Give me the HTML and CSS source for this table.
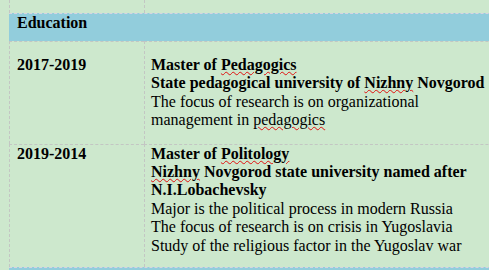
FILE: index.html
```html
<!DOCTYPE html>
<html lang="en">
<head>
<meta charset="utf-8">
<title>Education</title>
<link rel="stylesheet" href="styles.css">
</head>
<body>
<div class="table">
  <div class="cell prev"></div>
  <div class="cell prev"></div>

  <div class="head"><b>Education</b></div>

  <div class="cell c1 first"><b>2017-2019</b></div>
  <div class="cell c2 first">
    <b>Master of <span class="sp">Pedagogics</span></b><br>
    <b>State pedagogical university of <span class="sp">Nizhny</span> Novgorod</b><br>
    The focus of research is on organizational management in <span class="sp">pedagogics</span>
  </div>

  <div class="cell c1 second"><b>2019-2014</b></div>
  <div class="cell c2 second">
    <b>Master of <span class="sp">Politology</span></b><br>
    <b><span class="sp">Nizhny</span> Novgorod state university named after N.I.Lobachevsky</b><br>
    Major is the political process in modern Russia<br>
    The focus of research is on crisis in Yugoslavia<br>
    Study of the religious factor in the Yugoslav war
  </div>

  <div class="head next"></div>
</div>
</body>
</html>
```
FILE: styles.css
```css
html, body {
  margin: 0;
  padding: 0;
  background: #cde8cd;
  overflow: hidden;
}

body {
  font-family: "Liberation Serif", "Times New Roman", serif;
  font-size: 16px;
  line-height: 18.4px;
  color: #000;
}

.table {
  margin-left: 9px;
  width: 620px;
  display: grid;
  grid-template-columns: 135px 1fr;
}

.cell {
  border-left: 1px dashed #c3c6c3;
}

.c1 {
  padding-left: 7px;
}

.c2 {
  padding-left: 6px;
  padding-right: 130px;
}

.prev {
  height: 13px;
}

.head {
  grid-column: 1 / -1;
  background: #92cddc;
  border-top: 1px dashed #d8d3e0;
  padding: 0 0 9px 8px;
  height: 18px;
}

.first {
  border-top: 1px dashed #c3c6c3;
  padding-top: 14px;
  padding-bottom: 14px;
}

.second {
  border-top: 1px dashed #c3c6c3;
  padding-top: 0;
  padding-bottom: 12px;
}

.next {
  height: 20px;
  padding: 0;
}

.sp {
  text-decoration: underline wavy #e01010;
  text-decoration-thickness: 1px;
  text-underline-offset: 1px;
}
```
